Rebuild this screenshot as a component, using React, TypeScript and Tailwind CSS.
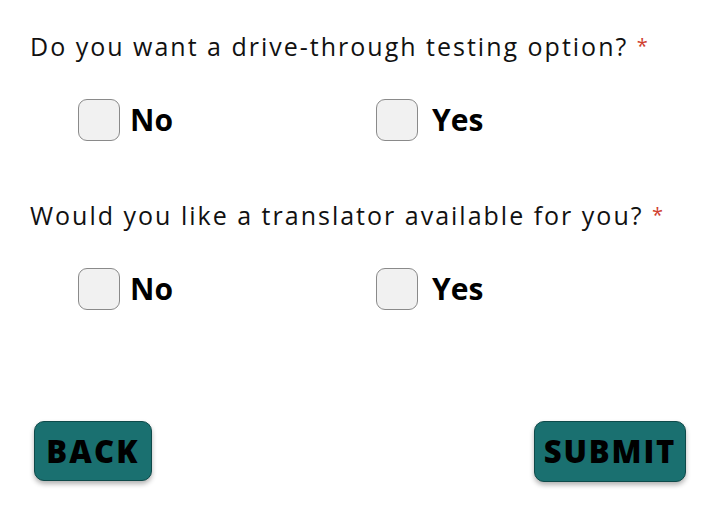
import { useState } from 'react'

const font = { fontFamily: '"Open Sans", "Liberation Sans", sans-serif' }

function Check({ label, checked, onToggle, wide }: { label: string; checked: boolean; onToggle: () => void; wide?: boolean }) {
  return (
    <label className={`flex items-center cursor-pointer ${wide ? 'gap-[14px]' : 'gap-[10px]'}`} onClick={onToggle}>
      <span className="w-[42px] h-[42px] rounded-[9px] border border-[#8a8a8a] bg-[#f1f1f1] flex items-center justify-center">
        {checked && <span className="w-4 h-4 rounded-sm bg-[#1a7070]" />}
      </span>
      <span className="text-[30px] font-bold text-black leading-none">{label}</span>
    </label>
  )
}

function Question({ text, value, onChange }: { text: string; value: string | null; onChange: (v: string) => void }) {
  return (
    <div>
      <p className="text-[25px] text-[#111] tracking-[0.08em] leading-8">
        {text} <span className="text-[#d0402f] text-[20px] tracking-normal align-top">*</span>
      </p>
      <div className="flex mt-[37px] pl-[48px]">
        <div className="w-[298px]">
          <Check label="No" checked={value === 'no'} onToggle={() => onChange('no')} />
        </div>
        <Check label="Yes" wide checked={value === 'yes'} onToggle={() => onChange('yes')} />
      </div>
    </div>
  )
}

export default function App() {
  const [driveThrough, setDriveThrough] = useState<string | null>(null)
  const [translator, setTranslator] = useState<string | null>(null)

  return (
    <div className="w-[721px] h-[512px] bg-white flex flex-col px-[30px] pt-[30px]" style={font}>
      <div className="flex flex-col gap-[58px]">
        <Question text="Do you want a drive-through testing option?" value={driveThrough} onChange={setDriveThrough} />
        <Question text="Would you like a translator available for you?" value={translator} onChange={setTranslator} />
      </div>

      <div className="flex justify-between mt-auto mb-[30px] pl-[4px] pr-[5px]">
        <button className="w-[118px] h-[60px] rounded-[10px] bg-[#1a7070] border border-[#0e4a4a] shadow-[0_3px_5px_rgba(0,0,0,0.3)] text-black font-extrabold text-[31px] tracking-[0.07em]">
          BACK
        </button>
        <button className="w-[152px] h-[61px] rounded-[10px] bg-[#1a7070] border border-[#0e4a4a] shadow-[0_3px_5px_rgba(0,0,0,0.3)] text-black font-extrabold text-[31px] tracking-[0.06em]">
          SUBMIT
        </button>
      </div>
    </div>
  )
}
